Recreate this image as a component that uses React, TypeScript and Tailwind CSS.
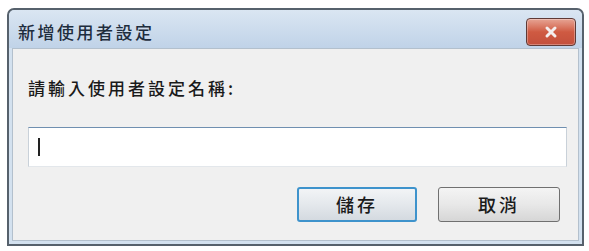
import React from "react";

const font = { fontFamily: '"Noto Sans CJK TC", "Noto Sans", sans-serif' };

function CloseButton() {
  return (
    <div className="mt-[8px] mr-[6px] flex h-[28px] w-[50px] items-center justify-center rounded-[4px] border border-[#5e3a36] bg-gradient-to-b from-[#e6a494] via-[#cf5a42] to-[#c3503c] shadow-[inset_0_0_0_1px_rgba(255,255,255,0.3)]">
      <svg width="16" height="14" viewBox="0 0 16 14">
        <path
          d="M4 3 L12 11 M12 3 L4 11"
          stroke="#f4eeee"
          strokeWidth="3"
          strokeLinecap="round"
        />
      </svg>
    </div>
  );
}

export default function App() {
  return (
    <div className="h-[251px] w-[589px] bg-white pl-[7px] pt-[8px]" style={font}>
      <div className="flex h-[238px] w-[577px] flex-col rounded-t-[7px] border-2 border-[#56616c] bg-[#d3e1ef]">
        {/* title bar */}
        <div className="flex h-[38px] items-start justify-between rounded-t-[6px] bg-gradient-to-b from-[#dae6f2] to-[#c0d3e8]">
          <div className="mt-[11px] ml-[9px] text-[17px] font-medium leading-[22px] tracking-[2.5px] text-[#1e2d3d]">
            新增使用者設定
          </div>
          <CloseButton />
        </div>

        {/* body */}
        <div className="mx-[3px] mb-[3px] flex flex-1 flex-col border border-[#b3c0cd] bg-[#f0f0f0]">
          <div className="ml-[15px] mt-[27px] text-[17px] font-medium leading-[24px] tracking-[3px] text-[#1a1a1a]">
            請輸入使用者設定名稱:
          </div>
          <div className="ml-[15px] mt-[27px] flex h-[40px] w-[539px] items-center border border-[#c9d1d9] border-t-[#6f8fb0] border-b-[#e3e7eb] bg-white pl-[9px]">
            <div className="h-[18px] w-[2px] bg-[#222]" />
          </div>
          <div className="mr-[18px] mt-[20px] flex justify-end gap-[21px]">
            <button className="flex h-[35px] w-[120px] items-center justify-center rounded-[3px] border-2 border-[#3e93cc] bg-gradient-to-b from-[#f2f4f6] via-[#e4e8ec] to-[#d4dae0] text-[18px] font-medium tracking-[3px] text-[#1a1a1a]">
              儲存
            </button>
            <button className="flex h-[35px] w-[122px] items-center justify-center rounded-[3px] border border-[#707070] bg-gradient-to-b from-[#f4f4f4] via-[#e8e8e8] to-[#d6d6d6] text-[18px] font-medium tracking-[3px] text-[#1a1a1a]">
              取消
            </button>
          </div>
        </div>
      </div>
    </div>
  );
}
